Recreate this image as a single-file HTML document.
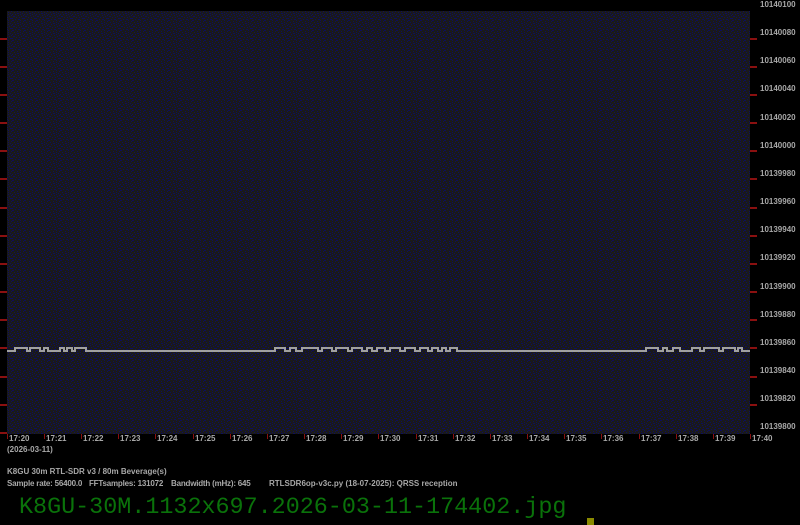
<!DOCTYPE html>
<html><head><style>
body{margin:0;background:#000;width:800px;height:525px;overflow:hidden;position:relative;font-family:"Liberation Sans",sans-serif}
.t{position:absolute;color:#a8a8a8;font-size:8px;font-weight:bold;white-space:nowrap}
.f{letter-spacing:-0.2px}
</style></head><body>
<svg width="800" height="525" style="position:absolute;left:0;top:0">
<defs>
<pattern id="n" width="12" height="10" patternUnits="userSpaceOnUse">
<rect width="12" height="10" fill="#1a1a1a"/>
<g fill="#0e0e5e">
<rect x="0" y="0" width="2" height="1"/><rect x="8" y="0" width="1" height="1"/>
<rect x="5" y="1" width="1" height="1"/><rect x="11" y="1" width="1" height="1"/>
<rect x="2" y="2" width="1" height="1"/><rect x="8" y="2" width="1" height="1"/>
<rect x="5" y="3" width="2" height="1"/><rect x="10" y="3" width="1" height="1"/>
<rect x="0" y="4" width="1" height="1"/><rect x="3" y="4" width="1" height="1"/><rect x="8" y="4" width="1" height="1"/>
<rect x="6" y="5" width="1" height="1"/><rect x="11" y="5" width="1" height="1"/>
<rect x="1" y="6" width="2" height="1"/><rect x="9" y="6" width="1" height="1"/>
<rect x="4" y="7" width="1" height="1"/><rect x="7" y="7" width="1" height="1"/>
<rect x="0" y="8" width="1" height="1"/><rect x="10" y="8" width="2" height="1"/>
<rect x="3" y="9" width="1" height="1"/><rect x="6" y="9" width="2" height="1"/>
</g></pattern></defs>
<rect x="7" y="11" width="743" height="423" fill="url(#n)"/>
<g fill="#8a1010">
<rect x="0" y="38" width="7" height="2"/><rect x="0" y="66" width="7" height="2"/><rect x="0" y="94" width="7" height="2"/><rect x="0" y="122" width="7" height="2"/><rect x="0" y="150" width="7" height="2"/><rect x="0" y="178" width="7" height="2"/><rect x="0" y="207" width="7" height="2"/><rect x="0" y="235" width="7" height="2"/><rect x="0" y="263" width="7" height="2"/><rect x="0" y="291" width="7" height="2"/><rect x="0" y="319" width="7" height="2"/><rect x="0" y="347" width="7" height="2"/><rect x="0" y="376" width="7" height="2"/><rect x="0" y="404" width="7" height="2"/><rect x="0" y="432" width="7" height="2"/>
<rect x="750" y="38" width="7" height="2"/><rect x="750" y="66" width="7" height="2"/><rect x="750" y="94" width="7" height="2"/><rect x="750" y="122" width="7" height="2"/><rect x="750" y="150" width="7" height="2"/><rect x="750" y="178" width="7" height="2"/><rect x="750" y="207" width="7" height="2"/><rect x="750" y="235" width="7" height="2"/><rect x="750" y="263" width="7" height="2"/><rect x="750" y="291" width="7" height="2"/><rect x="750" y="319" width="7" height="2"/><rect x="750" y="347" width="7" height="2"/><rect x="750" y="376" width="7" height="2"/><rect x="750" y="404" width="7" height="2"/>
</g>
<g fill="#8a1010">
<rect x="7" y="434" width="1" height="5"/><rect x="44" y="434" width="1" height="5"/><rect x="81" y="434" width="1" height="5"/><rect x="118" y="434" width="1" height="5"/><rect x="155" y="434" width="1" height="5"/><rect x="193" y="434" width="1" height="5"/><rect x="230" y="434" width="1" height="5"/><rect x="267" y="434" width="1" height="5"/><rect x="304" y="434" width="1" height="5"/><rect x="341" y="434" width="1" height="5"/><rect x="378" y="434" width="1" height="5"/><rect x="416" y="434" width="1" height="5"/><rect x="453" y="434" width="1" height="5"/><rect x="490" y="434" width="1" height="5"/><rect x="527" y="434" width="1" height="5"/><rect x="564" y="434" width="1" height="5"/><rect x="601" y="434" width="1" height="5"/><rect x="639" y="434" width="1" height="5"/><rect x="676" y="434" width="1" height="5"/><rect x="713" y="434" width="1" height="5"/><rect x="750" y="434" width="1" height="5"/>
</g>
<g stroke="#a0a0a0" stroke-width="2" fill="none">
<path d="M7 351 H15 V348 H27 V351 H30 V348 H40 V351 H44 V348 H48 V351 H60 V348 H64 V351 H67 V348 H72 V351 H75 V348 H86 V351 H275 V348 H285 V351 H290 V348 H296 V351 H302 V348 H318 V351 H322 V348 H332 V351 H336 V348 H348 V351 H352 V348 H362 V351 H367 V348 H372 V351 H377 V348 H385 V351 H390 V348 H400 V351 H405 V348 H415 V351 H420 V348 H428 V351 H432 V348 H438 V351 H442 V348 H446 V351 H450 V348 H457 V351 H646 V348 H658 V351 H663 V348 H667 V351 H673 V348 H680 V351 H692 V348 H700 V351 H704 V348 H719 V351 H723 V348 H735 V351 H738 V348 H742 V351 H750"/>
</g>
<rect x="587" y="518" width="7" height="7" fill="#8a8a00"/>
</svg>
<div class="t" style="left:760px;top:0">10140100</div>
<div class="t" style="left:760px;top:28px">10140080</div>
<div class="t" style="left:760px;top:56px">10140060</div>
<div class="t" style="left:760px;top:84px">10140040</div>
<div class="t" style="left:760px;top:113px">10140020</div>
<div class="t" style="left:760px;top:141px">10140000</div>
<div class="t" style="left:760px;top:169px">10139980</div>
<div class="t" style="left:760px;top:197px">10139960</div>
<div class="t" style="left:760px;top:225px">10139940</div>
<div class="t" style="left:760px;top:253px">10139920</div>
<div class="t" style="left:760px;top:282px">10139900</div>
<div class="t" style="left:760px;top:310px">10139880</div>
<div class="t" style="left:760px;top:338px">10139860</div>
<div class="t" style="left:760px;top:366px">10139840</div>
<div class="t" style="left:760px;top:394px">10139820</div>
<div class="t" style="left:760px;top:422px">10139800</div>
<div class="t" style="left:9px;top:434px">17:20</div>
<div class="t" style="left:46px;top:434px">17:21</div>
<div class="t" style="left:83px;top:434px">17:22</div>
<div class="t" style="left:120px;top:434px">17:23</div>
<div class="t" style="left:157px;top:434px">17:24</div>
<div class="t" style="left:195px;top:434px">17:25</div>
<div class="t" style="left:232px;top:434px">17:26</div>
<div class="t" style="left:269px;top:434px">17:27</div>
<div class="t" style="left:306px;top:434px">17:28</div>
<div class="t" style="left:343px;top:434px">17:29</div>
<div class="t" style="left:380px;top:434px">17:30</div>
<div class="t" style="left:418px;top:434px">17:31</div>
<div class="t" style="left:455px;top:434px">17:32</div>
<div class="t" style="left:492px;top:434px">17:33</div>
<div class="t" style="left:529px;top:434px">17:34</div>
<div class="t" style="left:566px;top:434px">17:35</div>
<div class="t" style="left:603px;top:434px">17:36</div>
<div class="t" style="left:641px;top:434px">17:37</div>
<div class="t" style="left:678px;top:434px">17:38</div>
<div class="t" style="left:715px;top:434px">17:39</div>
<div class="t" style="left:752px;top:434px">17:40</div>
<div class="t" style="left:7px;top:445px">(2026-03-11)</div>
<div class="t" style="left:7px;top:467px">K8GU 30m RTL-SDR v3 / 80m Beverage(s)</div>
<div class="t f" style="left:7px;top:479px">Sample rate: 56400.0</div>
<div class="t f" style="left:89px;top:479px">FFTsamples: 131072</div>
<div class="t f" style="left:171px;top:479px">Bandwidth (mHz): 645</div>
<div class="t" style="left:269px;top:479px">RTLSDR6op-v3c.py (18-07-2025): QRSS reception</div>
<div style="position:absolute;left:19px;top:496px;font-family:'Liberation Mono',monospace;font-size:23.4px;line-height:24px;color:#0a720a;white-space:nowrap">K8GU-30M.1132x697.2026-03-11-174402.jpg</div>
</body></html>
